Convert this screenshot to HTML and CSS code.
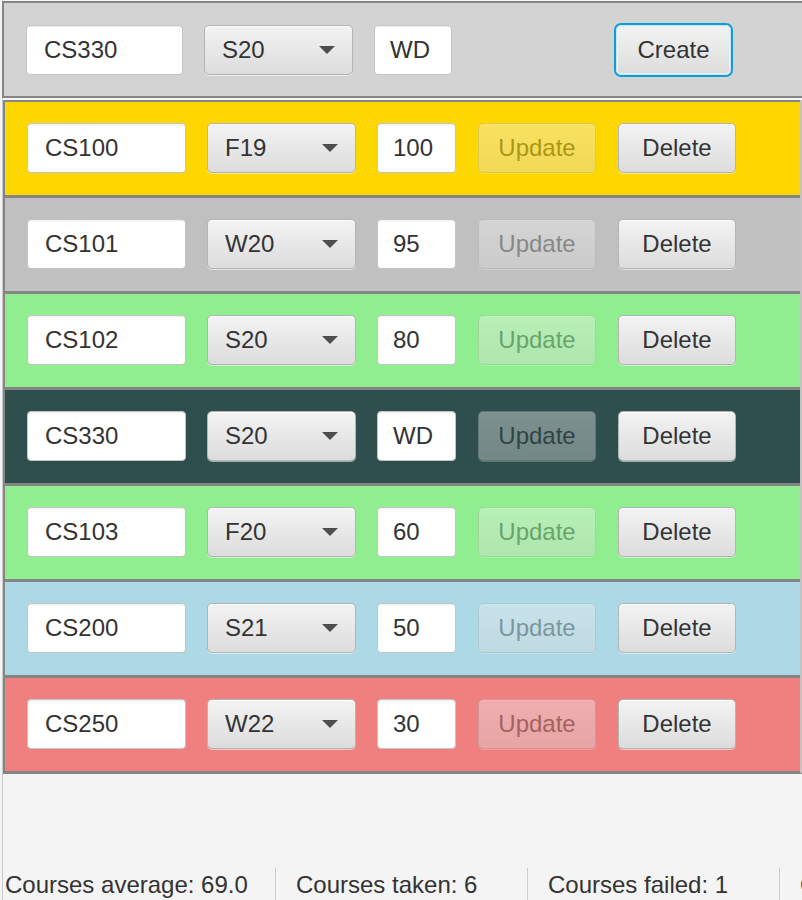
FILE: index.html
```html
<!DOCTYPE html>
<html>
<head>
<meta charset="utf-8">
<link rel="stylesheet" href="styles.css">
</head>
<body>
<div class="app">
  <div class="form-row">
    <div class="field name">CS330</div>
    <div class="combo"><span>S20</span><span class="arrow"></span></div>
    <div class="field grade">WD</div>
    <div class="btn ghost">Update</div>
    <div class="btn focused">Create</div>
  </div>
  <div class="list">
    <div class="row gold">
      <div class="field name">CS100</div>
      <div class="combo"><span>F19</span><span class="arrow"></span></div>
      <div class="field grade">100</div>
      <div class="btn disabled">Update</div>
      <div class="btn">Delete</div>
    </div>
    <div class="row silver">
      <div class="field name">CS101</div>
      <div class="combo"><span>W20</span><span class="arrow"></span></div>
      <div class="field grade">95</div>
      <div class="btn disabled">Update</div>
      <div class="btn">Delete</div>
    </div>
    <div class="row green">
      <div class="field name">CS102</div>
      <div class="combo"><span>S20</span><span class="arrow"></span></div>
      <div class="field grade">80</div>
      <div class="btn disabled">Update</div>
      <div class="btn">Delete</div>
    </div>
    <div class="row slate">
      <div class="field name">CS330</div>
      <div class="combo"><span>S20</span><span class="arrow"></span></div>
      <div class="field grade">WD</div>
      <div class="btn disabled">Update</div>
      <div class="btn">Delete</div>
    </div>
    <div class="row green">
      <div class="field name">CS103</div>
      <div class="combo"><span>F20</span><span class="arrow"></span></div>
      <div class="field grade">60</div>
      <div class="btn disabled">Update</div>
      <div class="btn">Delete</div>
    </div>
    <div class="row blue">
      <div class="field name">CS200</div>
      <div class="combo"><span>S21</span><span class="arrow"></span></div>
      <div class="field grade">50</div>
      <div class="btn disabled">Update</div>
      <div class="btn">Delete</div>
    </div>
    <div class="row coral">
      <div class="field name">CS250</div>
      <div class="combo"><span>W22</span><span class="arrow"></span></div>
      <div class="field grade">30</div>
      <div class="btn disabled">Update</div>
      <div class="btn">Delete</div>
    </div>
  </div>
  <div class="filler"></div>
  <div class="status">
    <div class="stat first">Courses average: 69.0</div>
    <div class="stat">Courses taken: 6</div>
    <div class="stat">Courses failed: 1</div>
    <div class="stat">Courses withdrawn: 1</div>
  </div>
</div>
</body>
</html>
```

FILE: styles.css
```css
html, body {
  margin: 0;
  padding: 0;
  background: #f4f4f4;
  overflow: hidden;
}

.app {
  width: 802px;
  height: 900px;
  display: flex;
  flex-direction: column;
  font-family: "Liberation Sans", Arial, sans-serif;
  font-size: 24px;
  color: #333333;
  background: linear-gradient(to right, #f4f4f4 2px, #c9c9c9 2px, #c9c9c9 3px, #f4f4f4 3px);
  overflow: hidden;
}

.form-row {
  margin: 1px 0 0 2px;
  width: 795px;
  height: 93px;
  border: 2px solid #858585;
  background: #d3d3d3;
  display: flex;
  align-items: center;
  gap: 21px;
  padding-left: 22px;
  box-sizing: content-box;
  flex: none;
}

.list {
  margin: 2px 0 0 3px;
  width: 797px;
  border-right: 2px solid #c4c4c4;
  border-bottom: 2px solid #858585;
  flex: none;
}

.row {
  height: 92px;
  padding-bottom: 1px;
  border-top: 2px solid #858585;
  border-bottom: 1px solid #858585;
  border-left: 2px solid #858585;
  display: flex;
  align-items: center;
  gap: 21px;
  padding-left: 22px;
}

.gold { background: #ffd700; }
.silver { background: #c0c0c0; }
.green { background: #90ee90; }
.slate { background: #2f4f4f; }
.blue { background: #add8e6; }
.coral { background: #f08080; }

.field {
  box-sizing: border-box;
  height: 50px;
  background: #ffffff;
  border: 1px solid #c4c4c4;
  border-radius: 4px;
  box-shadow: inset 0 2px 2px -1px rgba(0, 0, 0, 0.08);
  display: flex;
  align-items: center;
  padding-left: 17px;
  flex: none;
}

.field.name { width: 159px; }
.field.grade { width: 79px; padding-left: 15px; }

.form-row .field.name { width: 157px; }
.form-row .field.grade { width: 78px; }

.combo, .btn {
  box-sizing: border-box;
  height: 50px;
  border: 1px solid #b4b4b4;
  border-radius: 5px;
  background: linear-gradient(#f3f3f3, #dcdcdc);
  box-shadow: inset 0 1px 0 rgba(255, 255, 255, 0.9), 0 1px 0 rgba(255, 255, 255, 0.55);
  display: flex;
  align-items: center;
  flex: none;
}

.combo {
  width: 149px;
  padding: 0 17px;
  justify-content: space-between;
}

.arrow {
  width: 0;
  height: 0;
  border-left: 8px solid transparent;
  border-right: 8px solid transparent;
  border-top: 8px solid #4d4d4d;
}

.btn {
  width: 118px;
  margin-left: 1px;
  justify-content: center;
}

.btn.disabled { opacity: 0.4; }
.btn.ghost { visibility: hidden; }

.form-row .btn { margin-left: 0; }

.form-row .btn.focused {
  width: 115px;
  margin-left: 4px;
  border-color: #cfe4ef;
  box-shadow: 0 0 0 2px #0a9fd6, inset 0 0 0 1px #e6f2f8;
}

.filler { flex: 1; }

.status {
  height: 32px;
  display: flex;
  flex: none;
  white-space: nowrap;
}

.stat {
  flex: none;
  width: 252px;
  box-sizing: border-box;
  border-left: 1px solid #cccccc;
  padding: 3px 0 0 20px;
  overflow: hidden;
}

.stat.first {
  width: 275px;
  border-left: none;
  padding-left: 5px;
}
```
